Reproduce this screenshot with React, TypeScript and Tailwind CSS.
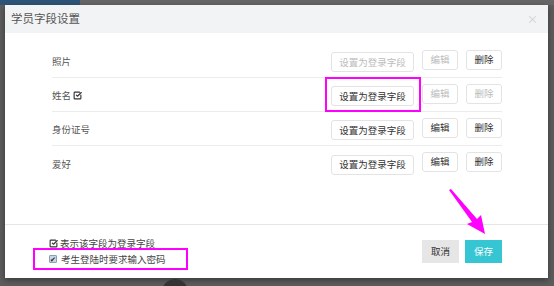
import React from 'react';
import { SquareCheckBig } from 'lucide-react';

const fields = [
  { name: '照片', login: false, setOn: false, editOn: false, delOn: true },
  { name: '姓名', login: true, setOn: true, editOn: false, delOn: false, mark: true },
  { name: '身份证号', login: false, setOn: true, editOn: true, delOn: true },
  { name: '爱好', login: false, setOn: true, editOn: true, delOn: true },
];

const Btn = ({ on, w, children }: { on: boolean; w: string; children: React.ReactNode }) => (
  <button
    className={`${w} h-[20px] rounded-[3px] border border-[#e3e3e3] bg-white text-[9.5px] leading-none ${on ? 'text-[#333]' : 'text-[#bcbcbc]'}`}
  >
    {children}
  </button>
);

const App = () => {
  return (
    <div
      className="w-[554px] h-[286px] overflow-hidden bg-[#5c5c5c] relative"
      style={{ fontFamily: '"Noto Sans CJK SC", "Noto Sans", sans-serif' }}
    >
      {/* backdrop bits */}
      <div className="flex h-[5px]">
        <div className="w-[80px] bg-[#2d5478]" />
        <div className="flex-1 bg-[#666]" />
      </div>

      {/* Modal */}
      <div className="ml-[5px] w-[543px] h-[273px] bg-white flex flex-col relative shadow-[0_2px_6px_rgba(0,0,0,0.4)]">
        {/* Header */}
        <div className="h-[28px] bg-[#f2f3f5] flex items-center justify-between pl-[6px] pr-[10px]">
          <span className="text-[11.5px] text-[#555]">学员字段设置</span>
          <span className="text-[11px] text-[#cfcfcf] leading-none">×</span>
        </div>

        {/* Body */}
        <div className="flex-1 pt-[11px] pl-[47px] pr-[46px]">
          {fields.map((f, i) => (
            <div
              key={i}
              className={`h-[34px] flex items-center justify-between ${i < fields.length - 1 ? 'border-b border-[#ececec]' : ''}`}
            >
              <div className="flex items-center gap-[2px] text-[9.5px] text-[#555] pt-[2px]">
                <span>{f.name}</span>
                {f.mark && <SquareCheckBig size={9} strokeWidth={3} color="#333" />}
              </div>
              <div className="flex items-center gap-[8px] pb-[2px]">
                <div className="relative">
                  <Btn on={f.setOn} w="w-[83px]">设置为登录字段</Btn>
                  {f.login && (
                    <div className="absolute -left-[6px] -right-[7px] -top-[4px] -bottom-[6px] border-2 border-[#f0f]" />
                  )}
                </div>
                <Btn on={f.editOn} w="w-[36px]">编辑</Btn>
                <Btn on={f.delOn} w="w-[36px]">删除</Btn>
              </div>
            </div>
          ))}
        </div>

        {/* Footer */}
        <div className="h-[54px] border-t border-[#e5e5e5] flex items-center justify-between pl-[44px] pr-[46px]">
          <div className="flex flex-col text-[9.5px] text-[#444]">
            <div className="flex items-center gap-[2px] h-[15px]">
              <SquareCheckBig size={9} strokeWidth={3} color="#333" />
              <span>表示该字段为登录字段</span>
            </div>
            <div className="relative flex items-center gap-[4px] h-[16px]">
              <span className="w-[8px] h-[8px] rounded-[1px] bg-[#c9d6e6] border border-[#8aa0b8] flex items-center justify-center text-[7px] leading-none text-[#222]">✔</span>
              <span>考生登陆时要求输入密码</span>
              <div className="absolute -left-[16px] -right-[22px] -top-[3px] -bottom-[3px] border-2 border-[#f0f]" />
            </div>
          </div>
          <div className="flex items-center gap-[6px]">
            <button className="w-[37px] h-[23px] bg-[#e6e6e6] text-[9.5px] text-[#333]">取消</button>
            <button className="w-[37px] h-[23px] bg-[#35c5d3] text-[9.5px] text-white">保存</button>
          </div>
        </div>

        {/* annotation arrow */}
        <svg className="absolute left-0 top-0 pointer-events-none" width="543" height="273">
          <polygon points="444,185 446,184 472,214 476,210 480,229 462,219 467,217" fill="#f0f" />
        </svg>
      </div>

      <div className="absolute left-[162px] top-[279px] w-[26px] h-[26px] rounded-full bg-[#333]" />
    </div>
  );
};

export default App;
